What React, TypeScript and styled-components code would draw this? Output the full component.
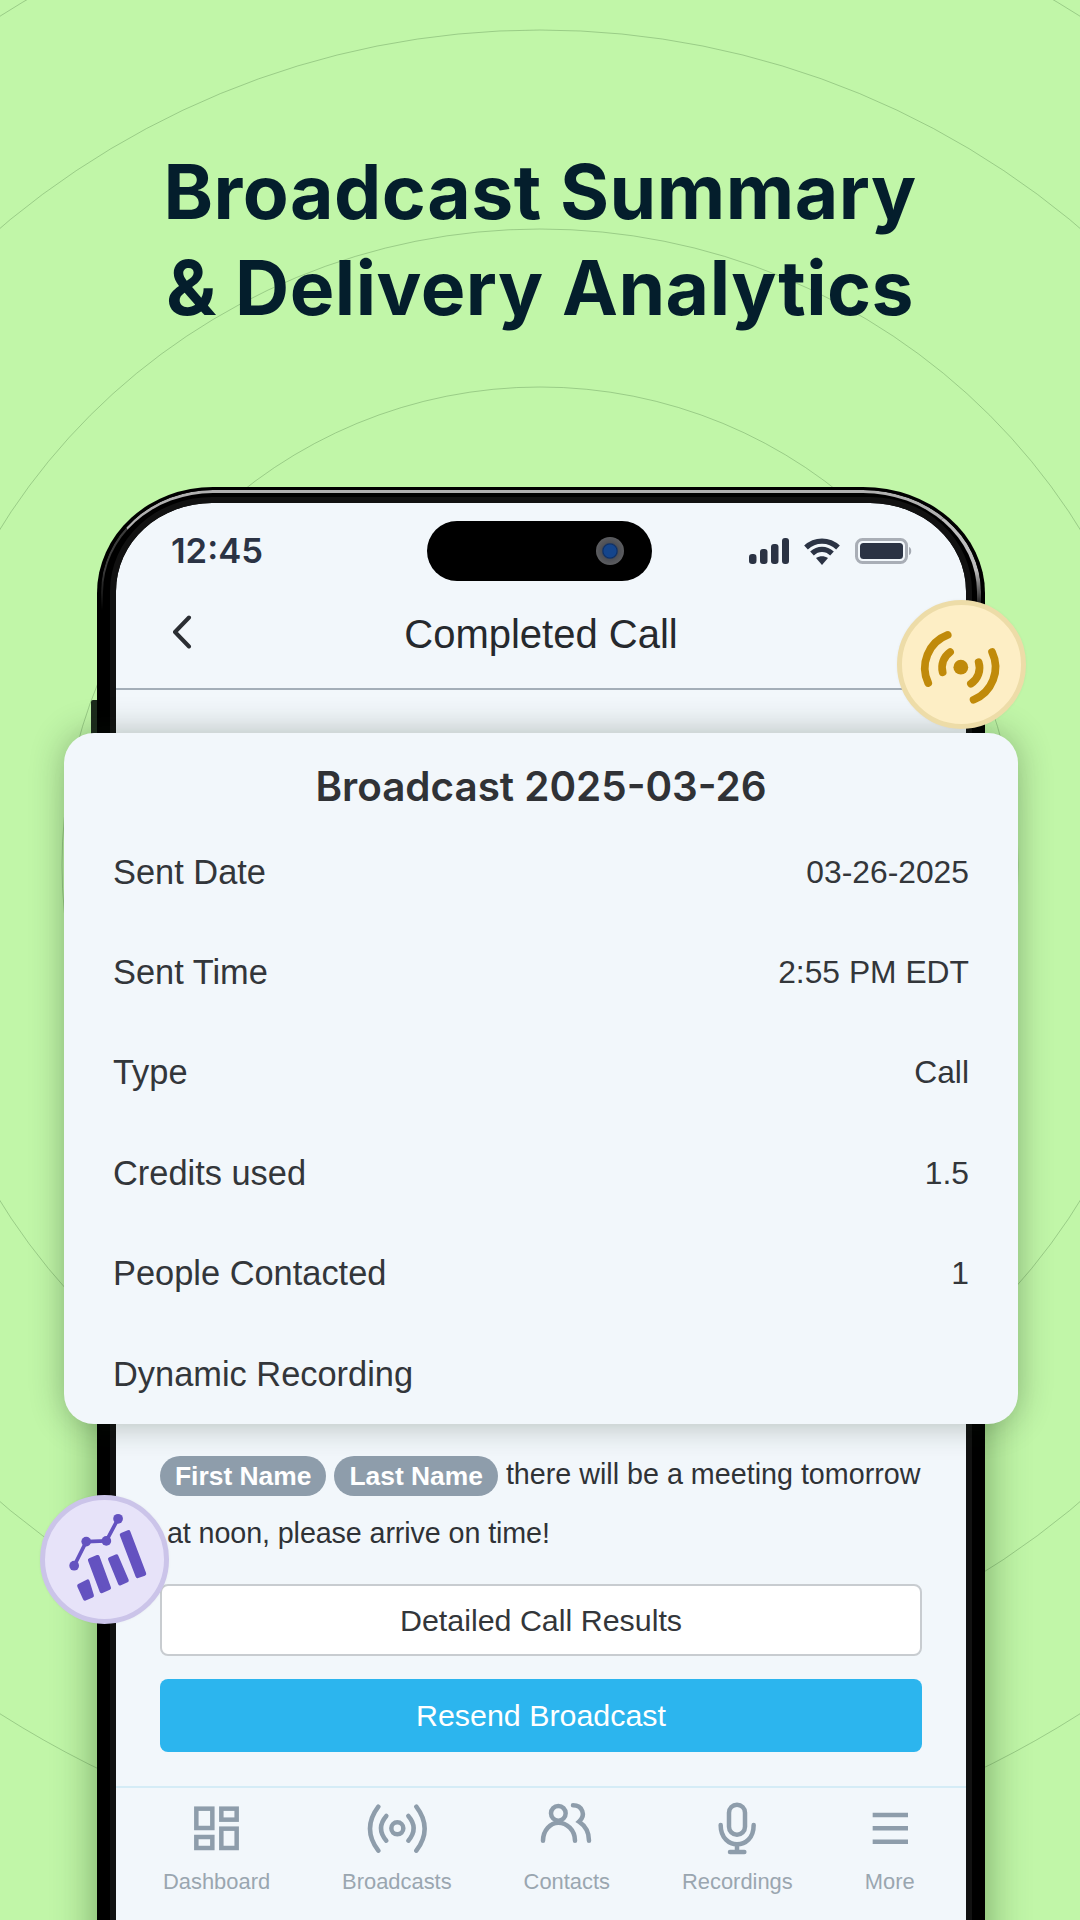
import React from "react";
import styled, { createGlobalStyle } from "styled-components";

const Global = createGlobalStyle`
  html, body { margin: 0; padding: 0; background: #c1f6a8; }
  * { box-sizing: border-box; }
`;

const Page = styled.div`
  position: relative;
  width: 1080px;
  height: 1920px;
  overflow: hidden;
  background: #c1f6a8;
  font-family: "Liberation Sans", Arial, sans-serif;
  display: flex;
  flex-direction: column;
`;

const Rings = styled.svg`
  position: absolute;
  inset: 0;
  width: 1080px;
  height: 1920px;
`;

const Headline = styled.h1`
  position: relative;
  margin: 0;
  height: 487px;
  padding-top: 144px;
  font-family: Inter, "Liberation Sans", sans-serif;
  font-weight: 650;
  font-size: 75px;
  line-height: 96px;
  letter-spacing: 0.5px;
  text-align: center;
  color: #041e2c;
`;

const Phone = styled.div`
  position: relative;
  flex: 1;
  margin: 0 95px 0 97px;
  padding: 16px 13px 0 13px;
  background: #000;
  border-radius: 116px 122px 0 0 / 106px 106px 0 0;
  box-shadow: 0 220px 44px rgba(20, 60, 10, 0.45);
  display: flex;

  &::before {
    content: "";
    position: absolute;
    inset: 3px 4px 0 4px;
    border-radius: 112px 118px 0 0 / 102px 102px 0 0;
    border-style: solid;
    border-width: 3px 4px 0 2px;
    border-color: #b0b0b0 #bdbdbd transparent #3c3c3c;
    mask-image: linear-gradient(to bottom, #000 80px, transparent 120px);
  }
`;

const SideKey = styled.div`
  position: absolute;
  left: -6px;
  top: 213px;
  width: 6px;
  height: 50px;
  background: #1c2a1c;
  border-radius: 2px 0 0 2px;
`;

const Screen = styled.div`
  position: relative;
  flex: 1;
  outline: 6px solid #111;
  background: #f2f7fb;
  border-radius: 96px 96px 0 0 / 88px 88px 0 0;
  display: flex;
  flex-direction: column;
  overflow: hidden;
  margin: 0 6px;
`;

const StatusBar = styled.div`
  height: 96px;
  flex: none;
  display: grid;
  grid-template-columns: 311px 225px 1fr;
  align-items: center;
`;

const Time = styled.div`
  padding-left: 55px;
  padding-bottom: 2px;
  font-family: Inter, "Liberation Sans", sans-serif;
  font-weight: 600;
  font-size: 34.6px;
  color: #2b3344;
`;

const Island = styled.div`
  height: 60px;
  border-radius: 30px;
  background: #000;
  display: flex;
  align-items: center;
  justify-content: flex-end;
  padding-right: 28px;
`;

const Lens = styled.div`
  width: 28px;
  height: 28px;
  border-radius: 50%;
  background: radial-gradient(circle at 50% 50%, #14458c 0 6px, #0c2f66 7px, #4d4f55 8.5px, #5c5d60 14px);
`;

const StatusIcons = styled.div`
  display: flex;
  align-items: center;
  justify-content: flex-end;
  gap: 15px;
  padding-right: 53px;
`;

const NavBar = styled.div`
  position: relative;
  flex: none;
  height: 91px;
  border-bottom: 2px solid #a4aeb8;
  display: flex;
  align-items: center;
  justify-content: center;
  padding-bottom: 18px;
  font-size: 40px;
  color: #26292d;
`;

const Back = styled.svg`
  position: absolute;
  left: 54px;
  top: 16px;
`;

const Spacer = styled.div`
  flex: 1;
`;

const Message = styled.div`
  padding: 0 44px;
  font-size: 28.7px;
  line-height: 59px;
  color: #2f3236;
  white-space: nowrap;
`;

const MessageLine = styled.div<{ $indent?: number }>`
  height: 59px;
  display: flex;
  align-items: center;
  padding-left: ${(p) => p.$indent ?? 0}px;
`;

const Pill = styled.span`
  height: 40px;
  margin: 5px 8px 0 0;
  padding: 0 15px;
  border-radius: 20px;
  background: #8e9dab;
  color: #fff;
  font-weight: 700;
  font-size: 26.4px;
  line-height: 40px;
`;

const Plain = styled.span`
  margin-top: 1px;
`;

const SecondLine = styled.span`
  margin-top: 2px;
  letter-spacing: -0.1px;
`;

const Actions = styled.div`
  padding: 22px 44px 34px;
  display: flex;
  flex-direction: column;
  gap: 23px;
`;

const Button = styled.div<{ $primary?: boolean }>`
  height: ${(p) => (p.$primary ? 73 : 72)}px;
  border-radius: 8px;
  display: flex;
  align-items: center;
  justify-content: center;
  font-size: 30.4px;
  background: ${(p) => (p.$primary ? "#2cb5ee" : "#fff")};
  color: ${(p) => (p.$primary ? "#fff" : "#33363a")};
  border: ${(p) => (p.$primary ? "none" : "2px solid #c8ccd0")};
`;

const TabBar = styled.div`
  flex: none;
  height: 134px;
  border-top: 2px solid #d5ecf6;
  padding: 13px 0 0 47px;
  display: flex;
  gap: 72px;
`;

const Tab = styled.div`
  display: flex;
  flex-direction: column;
  align-items: center;
  font-size: 21.9px;
  line-height: 26px;
  color: #9aa6b0;
`;

const TabIcon = styled.svg<{ $square?: boolean }>`
  display: block;
  height: 56px;
  margin-bottom: 12px;
  fill: none;
  stroke: #8e9dab;
  stroke-width: 13.5;
  stroke-linecap: ${(p) => (p.$square ? "butt" : "round")};
`;

const Card = styled.div`
  position: absolute;
  left: -33px;
  top: 246px;
  width: 954px;
  padding: 24px 49px 0;
  background: #f2f7fb;
  border-radius: 30px;
  box-shadow: 0 0 34px rgba(20, 40, 20, 0.3);
`;

const CardTitle = styled.div`
  height: 65px;
  line-height: 60px;
  text-align: center;
  font-family: Inter, "Liberation Sans", sans-serif;
  font-weight: 600;
  font-size: 40.4px;
  color: #303236;
`;

const Row = styled.div`
  height: 100.4px;
  display: flex;
  align-items: center;
  justify-content: space-between;
  font-size: 34.4px;
  color: #33363a;
`;

const RowValue = styled.span`
  font-size: 31.8px;
`;

const Badge = styled.div<{ $fill: string; $ring: string }>`
  position: absolute;
  width: 129px;
  height: 129px;
  border-radius: 50%;
  background: ${(p) => p.$fill};
  border: 5px solid ${(p) => p.$ring};
  box-shadow: 0 0 3px rgba(0, 0, 0, 0.05);
  display: flex;
  align-items: center;
  justify-content: center;
`;

const BroadcastBadge = styled(Badge)`
  left: 800px;
  top: 113px;
`;

const ChartBadge = styled(Badge)`
  left: -57px;
  top: 1008px;
`;

const BadgeIcon = styled.svg`
  width: 119px;
  height: 119px;
`;

const rows: [string, string][] = [
  ["Sent Date", "03-26-2025"],
  ["Sent Time", "2:55 PM EDT"],
  ["Type", "Call"],
  ["Credits used", "1.5"],
  ["People Contacted", "1"],
  ["Dynamic Recording", ""],
];

export default function App() {
  return (
    <Page>
      <Global />
      <Rings viewBox="0 0 1080 1920" fill="none" stroke="#6f9e63" strokeOpacity="0.48" strokeWidth="1">
        <circle cx="540" cy="865" r="478" />
        <circle cx="540" cy="865" r="636" />
        <circle cx="540" cy="865" r="835" />
        <circle cx="540" cy="865" r="1006" />
      </Rings>
      <Headline>
        Broadcast Summary
        <br />& Delivery Analytics
      </Headline>
      <Phone>
        <SideKey />
        <Screen>
          <StatusBar>
            <Time>12:45</Time>
            <Island>
              <Lens />
            </Island>
            <StatusIcons>
              <svg width="40" height="26" viewBox="0 0 40 26" fill="#2b3344">
                <rect x="0" y="16" width="7.5" height="10" rx="3.2" />
                <rect x="11" y="11" width="7.5" height="15" rx="3" />
                <rect x="22" y="6" width="7.5" height="20" rx="3" />
                <rect x="33" y="0" width="7" height="26" rx="3" />
              </svg>
              <svg width="36" height="27" viewBox="0 0 36 27" fill="none" stroke="#2b3344" strokeWidth="5.4">
                <path d="M2 9.5 C11 1 25 1 34 9.5" />
                <path d="M8 15.5 C14 10 22 10 28 15.5" />
                <path d="M12 20 L18 27 L24 20 C20 17.5 16 17.5 12 20Z" fill="#2b3344" stroke="none" />
              </svg>
              <svg width="58" height="26" viewBox="0 0 58 26">
                <rect x="1.5" y="1.5" width="50" height="23" rx="6" fill="none" stroke="#a9aeb6" strokeWidth="3" />
                <rect x="5" y="5" width="43" height="16" rx="3.5" fill="#2b3344" />
                <path d="M54 9 C57 10 57 16 54 17 Z" fill="#a5aab2" />
              </svg>
            </StatusIcons>
          </StatusBar>
          <NavBar>
            <Back width="24" height="34" viewBox="0 0 24 34" fill="none" stroke="#2b2e33" strokeWidth="4" strokeLinecap="round" strokeLinejoin="round">
              <path d="M19 2.5 L5 17 L19 31.5" />
            </Back>
            Completed Call
          </NavBar>
          <Spacer />
          <Message>
            <MessageLine>
              <Pill>First Name</Pill>
              <Pill>Last Name</Pill>
              <Plain>there will be a meeting tomorrow</Plain>
            </MessageLine>
            <MessageLine $indent={7}>
              <SecondLine>at noon, please arrive on time!</SecondLine>
            </MessageLine>
          </Message>
          <Actions>
            <Button>Detailed Call Results</Button>
            <Button $primary>Resend Broadcast</Button>
          </Actions>
          <TabBar>
            <Tab>
              <TabIcon $square width="52" viewBox="90 63 156 168">
                <rect x="106" y="86" width="48" height="58" />
                <rect x="106" y="171" width="48" height="33" />
                <rect x="181" y="86" width="46" height="33" />
                <rect x="181" y="146" width="46" height="58" />
              </TabIcon>
              Dashboard
            </Tab>
            <Tab>
              <TabIcon width="76.67" viewBox="590 63 230 168">
                <circle cx="705" cy="145" r="18" />
                <path d="M672 108 Q640 145 672 182" />
                <path d="M738 108 Q770 145 738 182" />
                <path d="M648 80 Q598 146 648 212" />
                <path d="M762 80 Q812 146 762 212" />
              </TabIcon>
              Broadcasts
            </Tab>
            <Tab>
              <TabIcon width="55" viewBox="120 63 165 168">
                <circle cx="178" cy="100" r="22" />
                <path d="M132 182 C132 150 155 128 178 128 C203 128 228 150 228 182" />
                <path d="M222 76 C250 76 262 105 240 125 C255 135 270 155 270 182" />
              </TabIcon>
              Contacts
            </Tab>
            <Tab>
              <TabIcon width="42" viewBox="650 63 126 168">
                <rect x="689" y="74" width="48" height="90" rx="24" />
                <path d="M664 135 C664 175 690 193 713 193 C738 193 763 175 763 135" />
                <path d="M713 193 V216 M692 216 H735" />
              </TabIcon>
              Recordings
            </Tab>
            <Tab>
              <TabIcon $square width="40" viewBox="1115 63 120 168">
                <path d="M1123 105 H1229 M1123 145 H1229 M1123 185 H1229" />
              </TabIcon>
              More
            </Tab>
          </TabBar>
        </Screen>
        <Card>
          <CardTitle>Broadcast 2025-03-26</CardTitle>
          {rows.map(([label, value]) => (
            <Row key={label}>
              <span>{label}</span>
              <RowValue>{value}</RowValue>
            </Row>
          ))}
        </Card>
        <BroadcastBadge $fill="#fdeec5" $ring="#eddca8">
          <BadgeIcon viewBox="187 78 354 354" fill="none" stroke="#c08a0a" strokeWidth="23" strokeLinecap="round">
            <circle cx="362" cy="263" r="22" fill="#c08a0a" stroke="none" />
            <path d="M330 218 A56 56 0 0 0 308 278" />
            <path d="M415 248 A56 56 0 0 1 392 312" />
            <path d="M323 167 A105 105 0 0 0 265 310" />
            <path d="M455 218 A105 105 0 0 1 400 360" />
          </BadgeIcon>
        </BroadcastBadge>
        <ChartBadge $fill="#e7e3f9" $ring="#cbc4e9">
          <BadgeIcon viewBox="45 60 355 355" fill="#6452c0" stroke="#6452c0" strokeLinejoin="round">
            <g strokeWidth="12">
              <polygon points="147,316 172,303 185,345 164,354" />
              <polygon points="179,239 202,230 236,322 214,332" />
              <polygon points="239,236 258,228 289,300 269,309" />
              <polygon points="274,164 294,156 341,280 321,287" />
            </g>
            <polyline points="132,256 168,184 228,182 263,116" fill="none" strokeWidth="11" />
            <g stroke="none">
              <circle cx="132" cy="256" r="14.5" />
              <circle cx="168" cy="184" r="14.5" />
              <circle cx="228" cy="182" r="14.5" />
              <circle cx="263" cy="116" r="14.5" />
            </g>
          </BadgeIcon>
        </ChartBadge>
      </Phone>
    </Page>
  );
}
